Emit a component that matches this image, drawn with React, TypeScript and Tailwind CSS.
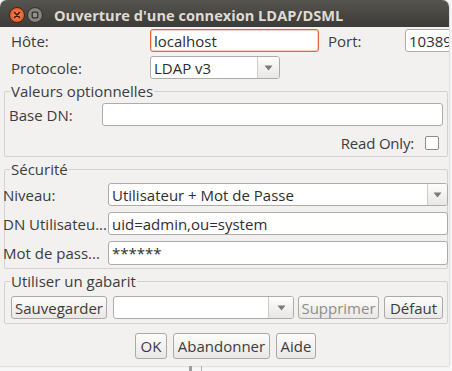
import React from "react";

function Arrow() {
  return (
    <svg width="9" height="6" viewBox="0 0 9 6">
      <path d="M0.5 0.5 L8.5 0.5 L4.5 5.5 Z" fill="#7b7a78" />
    </svg>
  );
}

function Combo({ className, arrowW, text }: { className: string; arrowW: string; text?: string }) {
  return (
    <div className={`flex shrink-0 h-[23px] bg-white border border-[#aeaca9] rounded-[3px] overflow-hidden ${className}`}>
      <div className="flex-1 flex items-center pl-[3px] text-[#2e2e2e] whitespace-nowrap">{text}</div>
      <div className={`${arrowW} h-full border-l border-[#cfcdca] bg-linear-to-b from-[#fdfdfd] to-[#e8e7e5] flex items-center justify-center`}>
        <Arrow />
      </div>
    </div>
  );
}

function Input({ className, text }: { className: string; text?: string }) {
  return (
    <div className={`h-[23px] shrink-0 bg-white border border-[#aeaca9] rounded-[3px] flex items-center pl-[3px] text-[#2e2e2e] whitespace-nowrap overflow-hidden ${className}`}>
      {text}
    </div>
  );
}

function Btn({ className, children, disabled }: { className: string; children: React.ReactNode; disabled?: boolean }) {
  return (
    <div
      className={`shrink-0 border border-[#aba9a6] rounded-[3px] bg-linear-to-b from-[#fcfcfb] to-[#e9e8e6] flex items-center justify-center whitespace-nowrap ${
        disabled ? "text-[#8f8d8a]" : "text-[#3c3c3c]"
      } ${className}`}
    >
      {children}
    </div>
  );
}

export default function App() {
  return (
    <div className="w-[452px] h-[371px] bg-[#f7f7f8] overflow-hidden font-['Open_Sans',sans-serif] text-[15px] text-[#3c3c3c] leading-[20px]">
      <div className="w-[449px] h-[366px] bg-[#f2f1f0] rounded-t-[7px] overflow-hidden flex flex-col shadow-[0_0_2px_rgba(60,60,80,0.45)]">
        {/* Title bar */}
        <div className="h-[27px] shrink-0 bg-linear-to-b from-[#56544f] to-[#3c3b37] flex items-start">
          <div className="shrink-0 mt-[7px] ml-[9px] w-[16px] h-[16px] rounded-full bg-radial from-[#f58a5a] to-[#dc4812] border border-[#4a2414] flex items-center justify-center">
            <svg width="8" height="8" viewBox="0 0 8 8">
              <path d="M1.5 1.5 L6.5 6.5 M6.5 1.5 L1.5 6.5" stroke="#3b1a0d" strokeWidth="1.6" strokeLinecap="round" />
            </svg>
          </div>
          <div className="shrink-0 mt-[7px] ml-[2px] w-[16px] h-[16px] rounded-full bg-radial from-[#9a9893] to-[#75736e] border border-[#33322f] flex items-center justify-center">
            <svg width="8" height="8" viewBox="0 0 8 8">
              <rect x="1.2" y="1.2" width="5.6" height="5.6" rx="1" fill="none" stroke="#2f2e2b" strokeWidth="1.3" />
            </svg>
          </div>
          <div className="ml-[11px] h-full flex items-center pt-[2px] text-[14.6px] font-bold text-[#dfdbd2] whitespace-nowrap">
            Ouverture d'une connexion LDAP/DSML
          </div>
        </div>

        {/* Host row */}
        <div className="mt-[2px] h-[23px] flex items-center pl-[11px] whitespace-nowrap">
          <div className="w-[139px] shrink-0">Hôte:</div>
          <Input className="w-[169px] border-[#e0673a] shadow-[inset_0_0_0_1px_rgba(240,150,110,0.45)]" text="localhost" />
          <div className="ml-[9px] w-[77px] shrink-0">Port:</div>
          <Input className="w-[60px]" text="10389" />
        </div>

        {/* Protocol row */}
        <div className="mt-[4px] h-[23px] flex items-center pl-[11px]">
          <div className="w-[139px] shrink-0">Protocole:</div>
          <Combo className="w-[130px]" arrowW="w-[22px]" text="LDAP v3" />
        </div>

        {/* Valeurs optionnelles */}
        <fieldset className="mt-[3px] ml-[4px] w-[444px] border border-[#d3d1ce] rounded-[2px] pb-[3px]">
          <legend className="ml-[5px] px-[1px] leading-[18px]">Valeurs optionnelles</legend>
          <div className="mt-[3px] h-[23px] flex items-center pl-[4px] pr-[4px]">
            <div className="w-[93px] shrink-0">Base DN:</div>
            <Input className="flex-1" />
          </div>
          <div className="mt-[7px] h-[20px] flex items-center justify-end pr-[8px]">
            <div className="mr-[11px] tracking-[-0.2px]">Read Only:</div>
            <div className="w-[14px] h-[14px] bg-white border border-[#8e8c89] rounded-[2px]" />
          </div>
        </fieldset>

        {/* Sécurité */}
        <fieldset className="mt-[3px] ml-[4px] w-[444px] border border-[#d3d1ce] rounded-[2px] pb-[3px]">
          <legend className="ml-[5px] px-[1px] leading-[18px]">Sécurité</legend>
          <div className="mt-[5px] ml-[-2px] mr-[-1px] flex flex-col gap-[6px]">
            <div className="h-[23px] flex items-center">
              <div className="w-[105px] shrink-0 whitespace-nowrap">Niveau:</div>
              <Combo className="flex-1" arrowW="w-[20px]" text="Utilisateur + Mot de Passe" />
            </div>
            <div className="h-[23px] flex items-center">
              <div className="w-[105px] shrink-0 whitespace-nowrap">DN Utilisateu...</div>
              <Input className="flex-1" text="uid=admin,ou=system" />
            </div>
            <div className="h-[24px] flex items-center">
              <div className="w-[105px] shrink-0 whitespace-nowrap">Mot de pass...</div>
              <Input className="flex-1 h-[24px]" text="******" />
            </div>
          </div>
        </fieldset>

        {/* Utiliser un gabarit */}
        <fieldset className="mt-[3px] ml-[4px] w-[444px] border border-[#d3d1ce] rounded-[2px] pb-[4px]">
          <legend className="ml-[5px] px-[1px] leading-[18px]">Utiliser un gabarit</legend>
          <div className="mt-[6px] h-[23px] flex items-center pl-[6px]">
            <Btn className="w-[96px] h-[23px]">Sauvegarder</Btn>
            <Combo className="ml-[6px] w-[181px]" arrowW="w-[25px]" />
            <Btn className="ml-[4px] w-[81px] h-[23px]" disabled>
              Supprimer
            </Btn>
            <Btn className="ml-[5px] w-[59px] h-[23px]">Défaut</Btn>
          </div>
        </fieldset>

        {/* Bottom buttons */}
        <div className="mt-[9px] flex justify-center gap-[6px] pl-[2px]">
          <Btn className="w-[32px] h-[26px]">OK</Btn>
          <Btn className="w-[97px] h-[26px]">Abandonner</Btn>
          <Btn className="w-[40px] h-[26px]">Aide</Btn>
        </div>
      </div>
      <div className="h-[5px] flex">
        <div className="ml-[189px] w-[3px] h-full bg-[#9c9c9c]" />
        <div className="ml-[9px] w-[1px] h-full bg-[#b0b0b0]" />
      </div>
    </div>
  );
}
